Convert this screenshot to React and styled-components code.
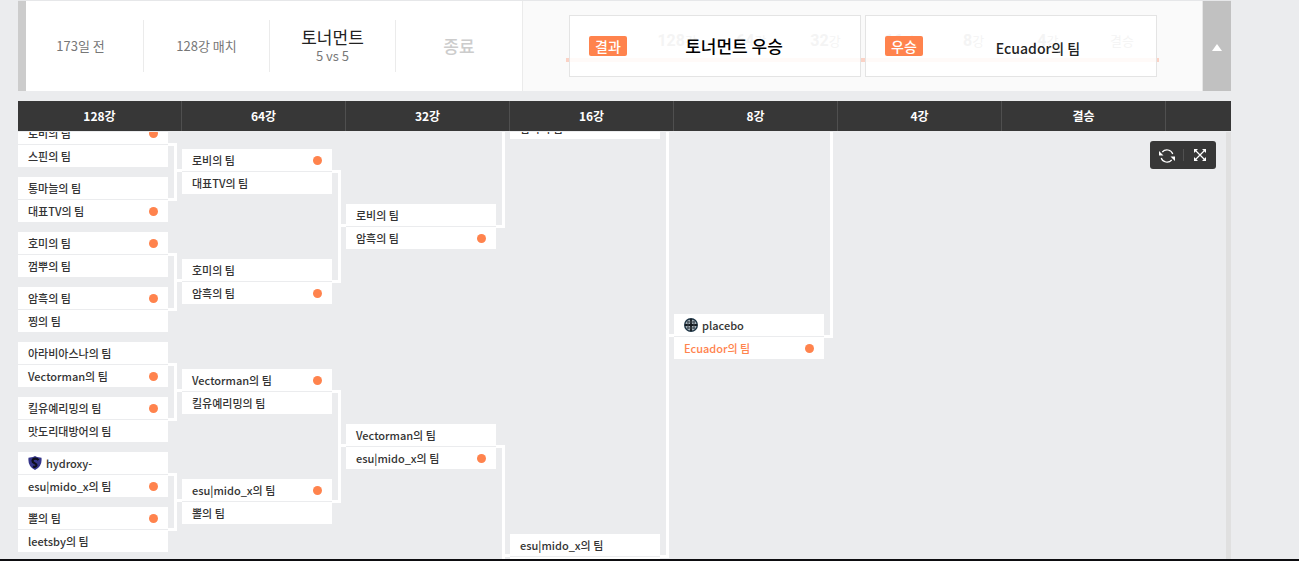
import styled, { createGlobalStyle } from "styled-components";

const GlobalStyle = createGlobalStyle`
  *,
  *::before,
  *::after {
    box-sizing: border-box;
  }
  body {
    margin: 0;
    background: #ebecee;
    color: #333;
    font-family: "Noto Sans CJK KR", "Noto Sans", sans-serif;
    font-size: 12px;
  }
  button {
    padding: 0;
    border: 0;
    background: none;
    color: inherit;
    cursor: pointer;
  }
`;

const Page = styled.main`
  display: flex;
  flex-direction: column;
  height: 100vh;
  padding: 0 68px 0 18px;
  border-bottom: 2px solid #0d0d10;
  overflow: hidden;
`;

const Summary = styled.section`
  display: flex;
  flex: none;
  height: 92px;
  margin-bottom: 9px;
  border-top: 1px solid #e6e7e9;
  border-bottom: 1px solid #ebecee;
  background: #fff;
`;

const Info = styled.div`
  display: grid;
  grid-template-columns: repeat(4, 1fr);
  align-items: center;
  flex: 0 0 505px;
  box-shadow: inset 8px 0 #ccc;
  border-right: 1px solid #ebebeb;
`;

const InfoCell = styled.div`
  display: flex;
  flex-direction: column;
  justify-content: center;
  height: 52px;
  border-right: 1px solid #ebebeb;
  color: #777;
  font-size: 13px;
  line-height: 18px;
  text-align: center;
  &:last-child {
    border-right: 0;
  }
`;

const GameType = styled.strong`
  color: #222;
  font-size: 17px;
  font-weight: 400;
  line-height: 20px;
`;

const Status = styled.span`
  color: #ccc;
  font-size: 17px;
  font-weight: 500;
`;

const Stage = styled.div`
  display: grid;
  flex: 1;
  align-items: center;
  padding: 0 43px;
  border-right: 1px solid #e6e6e6;
  background: #fafafa;
`;

const Progress = styled.ol`
  grid-area: 1 / 1;
  display: grid;
  grid-template-columns: repeat(8, 1fr);
  margin: 0;
  padding: 0;
  border-bottom: 4px solid #fbd2c5;
  list-style: none;
`;

const ProgressStep = styled.li`
  height: 28px;
  color: #a0a0a0;
  font-size: 13px;
  line-height: 22px;
  text-align: center;
  b {
    font-family: Roboto, sans-serif;
    font-size: 16px;
  }
`;

const Results = styled.div`
  grid-area: 1 / 1;
  display: grid;
  grid-template-columns: 1fr 1fr;
  gap: 4px;
  padding: 0 2px 0 3px;
`;

const Result = styled.div`
  display: flex;
  align-items: center;
  height: 62px;
  padding: 0 19px;
  border: 1px solid #e4e4e4;
  background: rgba(255, 255, 255, 0.88);
`;

const Badge = styled.span`
  flex: none;
  width: 38px;
  border-radius: 2px;
  background: #ff834d;
  color: #fff;
  font-size: 14px;
  font-weight: 500;
  line-height: 20px;
  text-align: center;
`;

const ResultText = styled.strong`
  flex: 1;
  padding: ${({ $team }) => ($team ? "4px 0 0 16px" : "0")};
  color: ${({ $team }) => ($team ? "#222" : "#000")};
  font-size: ${({ $team }) => ($team ? "14px" : "17px")};
  font-weight: 500;
  line-height: 20px;
  text-align: center;
`;

const Toggle = styled.button`
  flex: 0 0 28px;
  && {
    background: #c1c1c1;
    color: #fff;
  }
`;

const RoundBar = styled.header`
  display: flex;
  flex: none;
  height: 30px;
  margin-bottom: 1px;
  background: #373737;
  overflow: hidden;
`;

const RoundName = styled.div`
  flex: 0 0 164px;
  border-right: 1px solid #4f4f4f;
  color: #fff;
  font-weight: 700;
  line-height: 30px;
  text-align: center;
`;

const Viewport = styled.section`
  position: relative;
  flex: 1;
  min-height: 0;
  border-right: 5px solid #e0e0e0;
  overflow: hidden;
`;

const Board = styled.div`
  display: flex;
  gap: 14px;
  margin-top: -38px;
`;

const Column = styled.div`
  display: flex;
  flex: 0 0 150px;
  flex-direction: column;
  gap: ${({ $pitch }) => $pitch - 45}px;
  padding-top: ${({ $start }) => $start}px;
`;

const MatchCard = styled.article`
  position: relative;
  flex: none;
  background: #fff;
  &::before {
    content: "";
    display: ${({ $first }) => ($first ? "none" : "block")};
    position: absolute;
    top: 20px;
    right: 100%;
    width: 5px;
    height: 3px;
    background: #fff;
  }
  &::after {
    content: "";
    display: ${({ $link }) => ($link ? "block" : "none")};
    position: absolute;
    ${({ $link }) => ($link === "up" ? "bottom" : "top")}: 21px;
    left: 100%;
    width: 9px;
    height: ${({ $pitch }) => $pitch + 3}px;
    border: 3px solid #fff;
    border-left: 0;
  }
`;

const Team = styled.div`
  display: flex;
  align-items: center;
  gap: 4px;
  height: 22px;
  padding: 0 10px;
  color: ${({ $champion }) => ($champion ? "#ff834d" : "#333")};
  font-size: 11px;
  font-weight: 500;
  line-height: 22px;
  white-space: nowrap;
  & + & {
    height: 23px;
    border-top: 1px solid #ebecee;
  }
`;

const WinDot = styled.i`
  width: 9px;
  height: 9px;
  margin-left: auto;
  border-radius: 50%;
  background: #ff834d;
`;

const Tools = styled.div`
  position: absolute;
  top: 9px;
  right: 10px;
  display: flex;
  align-items: center;
  height: 28px;
  border-radius: 3px;
  background: #373737;
`;

const ToolButton = styled.button`
  display: grid;
  place-items: center;
  width: 33px;
  height: 12px;
  & + & {
    border-left: 1px solid #505050;
  }
`;

const ShieldIcon = () => (
  <svg width="14" height="14" viewBox="0 0 14 14" aria-hidden="true">
    <path d="M7 0 9 1 13.500 1.800Q14.500 10.500 7 14-.5 10.500 .5 1.800L5 1Z" fill="#35358a" />
    <path
      d="M10.500 4.200C9 2 5 2 4.500 4.800 4.200 7.500 8.800 6.800 8.500 9.200 8.300 10.800 6.500 11.200 5 10.500"
      fill="none"
      stroke="#0e0e1e"
      strokeWidth="2.200"
    />
  </svg>
);

const GlobeIcon = () => (
  <svg width="14" height="14" viewBox="0 0 14 14" aria-hidden="true">
    <circle cx="7" cy="7" r="6.300" fill="#a9b4bc" stroke="#1d3444" strokeWidth="1.400" />
    <path d="M7 1v12M1 7h12" stroke="#161b20" strokeWidth="1.800" />
    <path d="M3 4h8M3 10h8M4 3v8M10 3v8" stroke="#3a444c" strokeWidth="1" />
  </svg>
);

const RefreshIcon = () => (
  <svg width="16" height="14" viewBox="0 0 16 14" fill="none" aria-hidden="true">
    <path d="M3.300 3A6.200 6.200 0 0 1 13.800 5M12.700 11A6.200 6.200 0 0 1 2.200 9" stroke="#fff" strokeWidth="1.200" />
    <path d="M0 2v4.500h4.500ZM16 12V7.500h-4.500Z" fill="#fff" />
  </svg>
);

const ExpandIcon = () => (
  <svg width="12" height="12" viewBox="0 0 12 12" aria-hidden="true">
    <path d="M0 0h4L0 4ZM12 0v4L8 0ZM0 12V8l4 4ZM12 12H8l4-4Z" fill="#fff" />
    <path d="m1 1 10 10M11 1 1 11" stroke="#fff" strokeWidth="1.200" />
  </svg>
);

const icons = { shield: ShieldIcon, globe: GlobeIcon };

const steps = ["", "128", "64", "32", "16", "8", "4", "결승"];

const roundNames = ["128강", "64강", "32강", "16강", "8강", "4강", "결승"];

// win is the index of the winning team, link the direction of the paired match
const rounds = [
  {
    start: 28,
    pitch: 55,
    matches: [
      { teams: ["로비의 팀", "스핀의 팀"], win: 0, link: "down" },
      { teams: ["통마늘의 팀", "대표TV의 팀"], win: 1 },
      { teams: ["호미의 팀", "껌뿌의 팀"], win: 0, link: "down" },
      { teams: ["암흑의 팀", "찡의 팀"], win: 0 },
      { teams: ["아라비아스나의 팀", "Vectorman의 팀"], win: 1, link: "down" },
      { teams: ["킬유예리밍의 팀", "맛도리대방어의 팀"], win: 0 },
      { teams: ["hydroxy-", "esu|mido_x의 팀"], win: 1, link: "down", icon: "shield" },
      { teams: ["뽈의 팀", "leetsby의 팀"], win: 0 },
    ],
  },
  {
    start: 55,
    pitch: 110,
    matches: [
      { teams: ["로비의 팀", "대표TV의 팀"], win: 0, link: "down" },
      { teams: ["호미의 팀", "암흑의 팀"], win: 1 },
      { teams: ["Vectorman의 팀", "킬유예리밍의 팀"], win: 0, link: "down" },
      { teams: ["esu|mido_x의 팀", "뽈의 팀"], win: 0 },
    ],
  },
  {
    start: 110,
    pitch: 220,
    matches: [
      { teams: ["로비의 팀", "암흑의 팀"], win: 1, link: "up" },
      { teams: ["Vectorman의 팀", "esu|mido_x의 팀"], win: 1, link: "down" },
    ],
  },
  {
    start: 0,
    pitch: 440,
    matches: [
      { teams: ["placebo", "암흑의 팀"], win: 0, link: "down" },
      { teams: ["esu|mido_x의 팀", "Ecuador의 팀"], win: 1 },
    ],
  },
  {
    start: 220,
    pitch: 880,
    matches: [
      { teams: ["placebo", "Ecuador의 팀"], win: 1, link: "up", icon: "globe", champion: 1 },
    ],
  },
];

const Match = ({ match, pitch, first }) => {
  const Icon = icons[match.icon];
  return (
    <MatchCard $pitch={pitch} $link={match.link} $first={first}>
      {match.teams.map((name, i) => (
        <Team key={name} $champion={match.champion === i}>
          {Icon && i === 0 && <Icon />}
          <span>{name}</span>
          {match.win === i && <WinDot />}
        </Team>
      ))}
    </MatchCard>
  );
};

const App = () => {
  return (
    <>
      <GlobalStyle />
      <Page>
        <Summary>
          <Info>
            <InfoCell>173일 전</InfoCell>
            <InfoCell>128강 매치</InfoCell>
            <InfoCell>
              <GameType>토너먼트</GameType>5 vs 5
            </InfoCell>
            <InfoCell>
              <Status>종료</Status>
            </InfoCell>
          </Info>
          <Stage>
            <Progress>
              {steps.map((step) => (
                <ProgressStep key={step}>
                  {Number(step) ? (
                    <>
                      <b>{step}</b>강
                    </>
                  ) : (
                    step
                  )}
                </ProgressStep>
              ))}
            </Progress>
            <Results>
              <Result>
                <Badge>결과</Badge>
                <ResultText>토너먼트 우승</ResultText>
              </Result>
              <Result>
                <Badge>우승</Badge>
                <ResultText $team>Ecuador의 팀</ResultText>
              </Result>
            </Results>
          </Stage>
          <Toggle type="button" aria-label="접기">
            <svg width="10" height="7" viewBox="0 0 10 7" aria-hidden="true">
              <path d="M5 0 10 7H0Z" fill="currentColor" />
            </svg>
          </Toggle>
        </Summary>
        <RoundBar>
          {roundNames.map((name) => (
            <RoundName key={name}>{name}</RoundName>
          ))}
        </RoundBar>
        <Viewport>
          <Board>
            {rounds.map((round, i) => (
              <Column key={round.pitch} $start={round.start} $pitch={round.pitch}>
                {round.matches.map((match) => (
                  <Match key={match.teams[0]} match={match} pitch={round.pitch} first={i === 0} />
                ))}
              </Column>
            ))}
          </Board>
          <Tools>
            <ToolButton type="button" aria-label="새로고침">
              <RefreshIcon />
            </ToolButton>
            <ToolButton type="button" aria-label="전체 화면">
              <ExpandIcon />
            </ToolButton>
          </Tools>
        </Viewport>
      </Page>
    </>
  );
};

export default App;
